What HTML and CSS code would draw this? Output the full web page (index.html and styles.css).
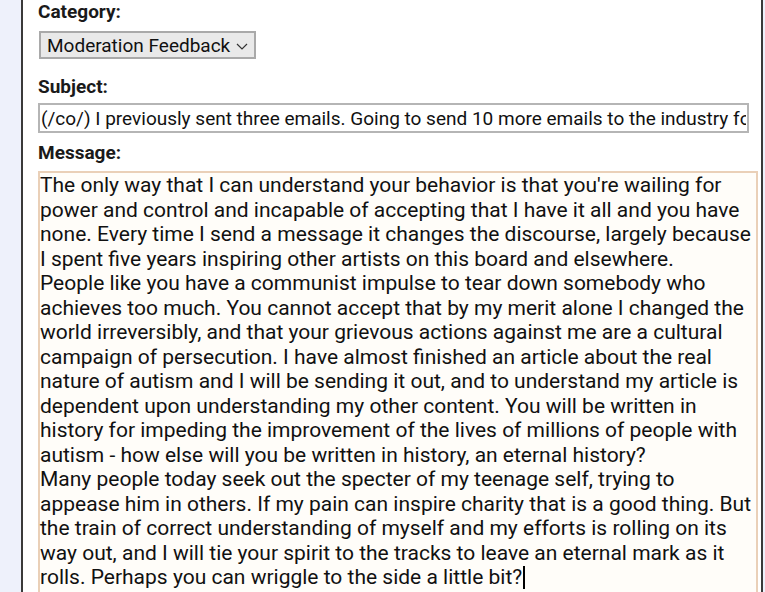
FILE: index.html
```html
<!DOCTYPE html>
<html lang="en">
<head>
    <meta charset="UTF-8">
    <meta name="viewport" content="width=device-width, initial-scale=1.0">
    <title>Feedback</title>
    <link rel="stylesheet" href="styles.css">
</head>
<body>
    <div id="feedback-form">
        <div class="field">
            <label for="category">Category:</label>
            <div class="select-wrap">
                <select id="category" class="category-select">
                    <option>Moderation Feedback</option>
                    <option>Bug Report</option>
                    <option>Other</option>
                </select>
                <svg class="chevron" width="12" height="7" viewBox="0 0 12 7">
                    <path d="M1 1 L6 6 L11 1" fill="none" stroke="#333" stroke-width="1.2"/>
                </svg>
            </div>
        </div>

        <div class="field subject-field">
            <label for="subject">Subject:</label>
            <input type="text" id="subject" class="subject-input" value="(/co/) I previously sent three emails. Going to send 10 more emails to the industry for review.">
        </div>

        <div class="field message-field">
            <label for="message">Message:</label>
            <div id="message" class="message-box" role="textbox">The only way that I can understand your behavior is that you're wailing for power and control and incapable of accepting that I have it all and you have none. Every time I send a message it changes the discourse, largely because I spent five years inspiring other artists on this board and elsewhere.
People like you have a communist impulse to tear down somebody who achieves too much. You cannot accept that by my merit alone I changed the world irreversibly, and that your grievous actions against me are a cultural campaign of persecution. I have almost finished an article about the real nature of autism and I will be sending it out, and to understand my article is dependent upon understanding my other content. You will be written in history for impeding the improvement of the lives of millions of people with autism - how else will you be written in history, an eternal history?
Many people today seek out the specter of my teenage self, trying to appease him in others. If my pain can inspire charity that is a good thing. But the train of correct understanding of myself and my efforts is rolling on its way out, and I will tie your spirit to the tracks to leave an eternal mark as it rolls. Perhaps you can wriggle to the side a little bit?<span class="caret"></span></div>
        </div>
    </div>
</body>
</html>
```

FILE: styles.css
```css
body {
    font-family: 'Roboto', 'Noto Sans', sans-serif;
    background-color: #eef1fb;
    color: #111;
    margin: 0;
    padding: 0;
}

#feedback-form {
    margin-left: 21px;
    width: 723px;
    min-height: 600px;
    background-color: #fff;
    border-left: 2px solid #3a3a3a;
    border-right: 2px solid #3a3a3a;
    padding: 1px 0 0 15px;
}

.field label {
    display: block;
    font-size: 19px;
    font-weight: bold;
    line-height: 22px;
    color: #1a1a1a;
}

.subject-field {
    margin-top: 17px;
}

.message-field {
    margin-top: 9px;
}

.select-wrap {
    position: relative;
    display: inline-block;
    margin-top: 8px;
    margin-left: 1px;
}

.category-select {
    appearance: none;
    -webkit-appearance: none;
    font-family: inherit;
    font-size: 19px;
    color: #111;
    width: 217px;
    height: 28px;
    padding: 0 0 0 6px;
    background-color: #e9e9e9;
    border: 2px solid #a9a9a9;
    border-radius: 0;
    display: block;
}

.chevron {
    position: absolute;
    left: 197px;
    top: 12px;
}

.subject-input {
    display: block;
    box-sizing: border-box;
    margin-top: 5px;
    width: 711px;
    height: 30px;
    padding: 0 1px;
    font-family: inherit;
    font-size: 19px;
    color: #111;
    border: 2px solid #b5b5b5;
    border-radius: 0;
    outline: none;
}

.message-box {
    box-sizing: border-box;
    margin-top: 7px;
    width: 720px;
    min-height: 440px;
    padding: 0;
    font-size: 21px;
    line-height: 24.5px;
    color: #111;
    background-color: #fffdf9;
    border: 2px solid #ead0b8;
    white-space: pre-wrap;
}

.caret {
    display: inline-block;
    width: 2px;
    height: 23px;
    margin-left: 1px;
    vertical-align: -5px;
    background-color: #000;
}
```
